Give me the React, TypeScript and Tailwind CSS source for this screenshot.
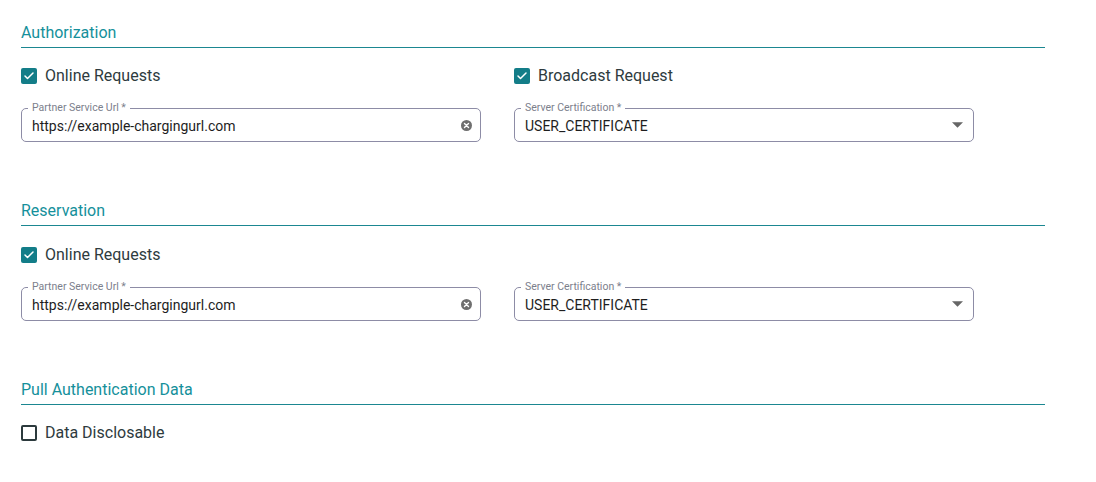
import { Check } from "lucide-react"

function SectionTitle({ children }: { children: string }) {
  return (
    <div className="border-b border-[#1b8791] pb-[4px] text-[16px] leading-[20px] text-[#15909b]">
      {children}
    </div>
  )
}

function CheckField({ label, checked }: { label: string; checked: boolean }) {
  return (
    <label className="flex h-[20px] items-center gap-[8px]">
      {checked ? (
        <span className="flex size-[16px] flex-none items-center justify-center rounded-[2px] bg-[#137d88] text-white">
          <Check className="size-[12px]" strokeWidth={3} />
        </span>
      ) : (
        <span className="size-[16px] flex-none rounded-[2px] border-2 border-[#2c3a3d]" />
      )}
      <span className="text-[16px] leading-[20px] text-[#2e3b3e]">{label}</span>
    </label>
  )
}

function Outlined({
  label,
  value,
  adornment,
}: {
  label: string
  value: string
  adornment: "clear" | "select"
}) {
  return (
    <div className="relative flex h-[34px] w-[460px] items-center rounded-[5px] border border-[#8d8ca6] pt-[2px] pr-[8px] pl-[10px]">
      <span className="absolute top-[-7px] left-[6px] bg-white px-[4px] text-[10.5px] leading-[12px] text-[#7c808c]">
        {label}
      </span>
      <span className="flex-1 text-[14px] text-[#1e1e1e]">{value}</span>
      {adornment === "clear" ? (
        <svg width="11" height="11" viewBox="0 0 12 12" className="mb-[2px] flex-none">
          <circle cx="6" cy="6" r="6" fill="#6f6f6f" />
          <path d="M3.8 3.8 L8.2 8.2 M8.2 3.8 L3.8 8.2" stroke="#fff" strokeWidth="1.5" strokeLinecap="round" />
        </svg>
      ) : (
        <svg width="11" height="6" viewBox="0 0 10 5" className="mr-[2px] mb-[2px] flex-none">
          <path d="M0 0 L10 0 L5 5 Z" fill="#666" />
        </svg>
      )}
    </div>
  )
}

export default function App() {
  return (
    <div
      className="min-h-screen w-full bg-white pt-[23px] pl-[21px]"
      style={{ fontFamily: "Roboto, 'Noto Sans', sans-serif" }}
    >
      <div className="flex w-[1024px] flex-col">
        <section>
          <SectionTitle>Authorization</SectionTitle>
          <div className="mt-[18px] flex gap-[33px]">
            <div className="w-[460px]">
              <CheckField label="Online Requests" checked />
            </div>
            <CheckField label="Broadcast Request" checked />
          </div>
          <div className="mt-[22px] flex gap-[33px]">
            <Outlined label="Partner Service Url *" value="https://example-chargingurl.com" adornment="clear" />
            <Outlined label="Server Certification *" value="USER_CERTIFICATE" adornment="select" />
          </div>
        </section>

        <section className="mt-[59px]">
          <SectionTitle>Reservation</SectionTitle>
          <div className="mt-[19px]">
            <CheckField label="Online Requests" checked />
          </div>
          <div className="mt-[22px] flex gap-[33px]">
            <Outlined label="Partner Service Url *" value="https://example-chargingurl.com" adornment="clear" />
            <Outlined label="Server Certification *" value="USER_CERTIFICATE" adornment="select" />
          </div>
        </section>

        <section className="mt-[59px]">
          <SectionTitle>Pull Authentication Data</SectionTitle>
          <div className="mt-[18px]">
            <CheckField label="Data Disclosable" checked={false} />
          </div>
        </section>
      </div>
    </div>
  )
}
